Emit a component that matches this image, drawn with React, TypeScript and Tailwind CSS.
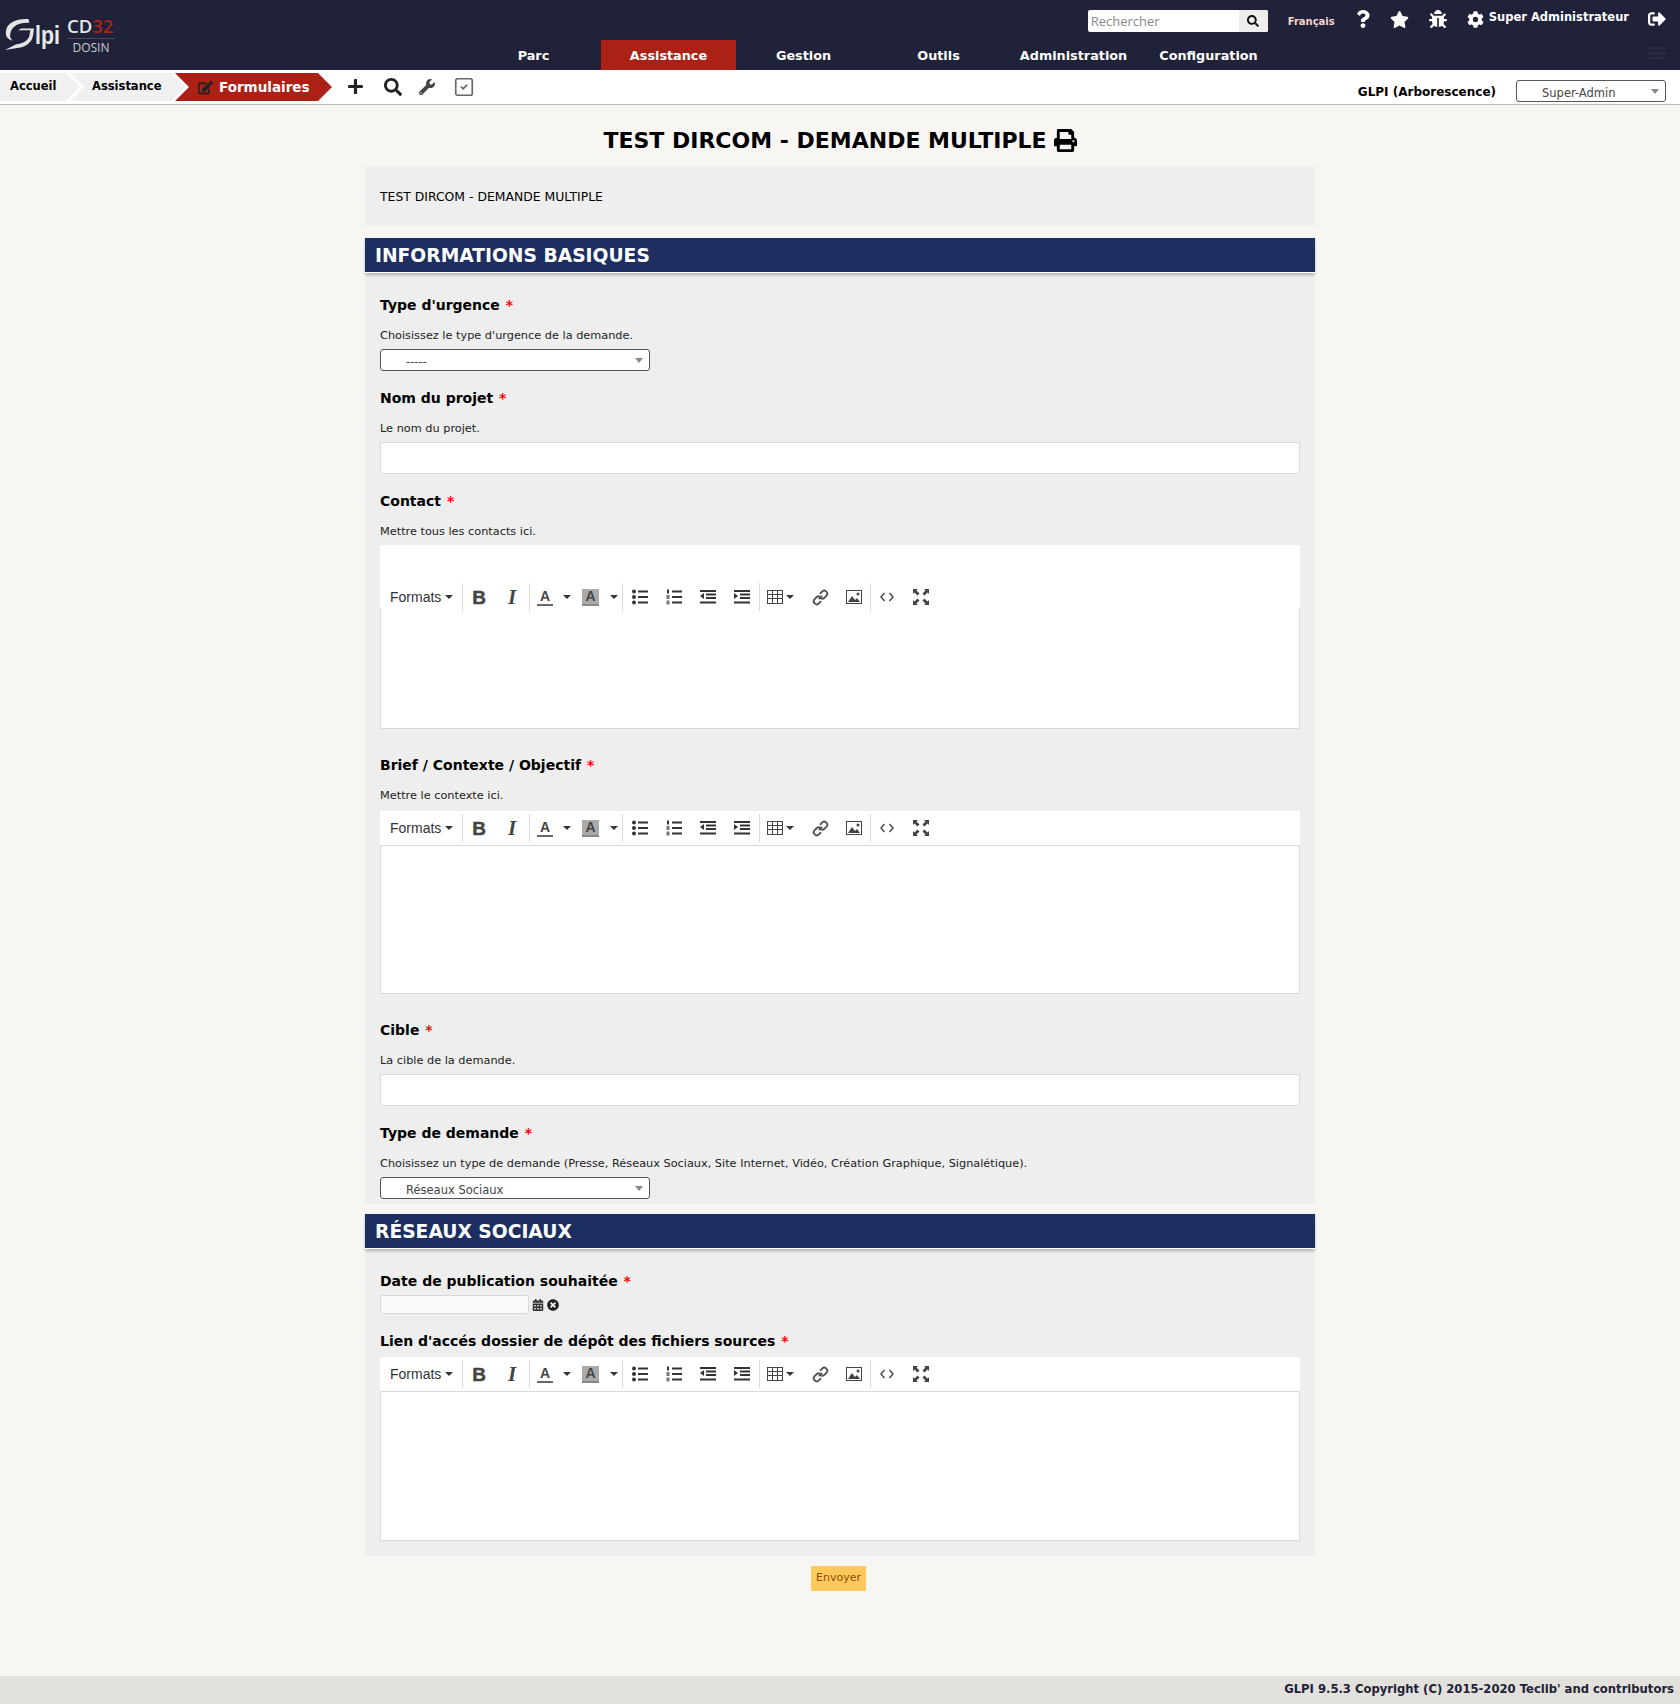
import {
  FaBug,
  FaCalendarAlt,
  FaCog,
  FaEdit,
  FaPlus,
  FaPrint,
  FaQuestion,
  FaSearch,
  FaSignOutAlt,
  FaStar,
  FaTimesCircle,
  FaWrench,
} from "react-icons/fa";
import { SquareCheck } from "lucide-react";

const menu = ["Parc", "Assistance", "Gestion", "Outils", "Administration", "Configuration"];

function Caret({ className = "" }: { className?: string }) {
  return (
    <span
      className={`inline-block h-0 w-0 border-x-[4px] border-t-[4px] border-x-transparent border-t-[#333] ${className}`}
    />
  );
}

function ToolIcon({ children, width = "w-[34px]" }: { children: React.ReactNode; width?: string }) {
  return <div className={`flex h-full shrink-0 items-center justify-center ${width}`}>{children}</div>;
}

function Sep() {
  return <div className="h-[28px] w-px shrink-0 bg-[#d9d9d9]" />;
}

function Lines({ kind }: { kind: "bullet" | "number" | "outdent" | "indent" }) {
  return (
    <svg width="16" height="16" viewBox="0 0 16 16" fill="#333">
      {kind === "bullet" && (
        <>
          <circle cx="2" cy="2.5" r="2" />
          <circle cx="2" cy="8" r="2" />
          <circle cx="2" cy="13.5" r="2" />
          <rect x="6" y="1.5" width="10" height="2" />
          <rect x="6" y="7" width="10" height="2" />
          <rect x="6" y="12.5" width="10" height="2" />
        </>
      )}
      {kind === "number" && (
        <>
          <rect x="1" y="0.5" width="2" height="4" />
          <rect x="0.5" y="6" width="3" height="4" fill="#777" />
          <rect x="0.5" y="11.5" width="3" height="4" fill="#777" />
          <rect x="6" y="1.5" width="10" height="2" />
          <rect x="6" y="7" width="10" height="2" />
          <rect x="6" y="12.5" width="10" height="2" />
        </>
      )}
      {(kind === "outdent" || kind === "indent") && (
        <>
          <rect x="0" y="1" width="16" height="2" />
          <rect x="6" y="4.500" width="10" height="2" />
          <rect x="6" y="8" width="10" height="2" />
          <rect x="0" y="12.500" width="16" height="2" />
          {kind === "outdent" ? <path d="M4 4v6L0 7z" /> : <path d="M0 4v6L4 7z" />}
        </>
      )}
    </svg>
  );
}

function Toolbar() {
  return (
    <div className="flex h-full items-center font-['Liberation_Sans',sans-serif] text-[#333]">
      <div className="flex w-[82px] shrink-0 items-center gap-[4px] pl-[10px] text-[14px]">
        Formats
        <Caret />
      </div>
      <Sep />
      <ToolIcon width="w-[32px]">
        <span className="text-[19px] leading-none font-bold text-[#444] [-webkit-text-stroke:0.4px_#444]">B</span>
      </ToolIcon>
      <ToolIcon width="w-[34px]">
        <span className="font-['Liberation_Serif',serif] text-[21px] leading-none font-bold text-[#444] italic">I</span>
      </ToolIcon>
      <Sep />
      <ToolIcon width="w-[30px]">
        <span className="w-[16px] border-b-2 border-[#666] text-center text-[14px] leading-[15px] font-bold text-[#444]">
          A
        </span>
      </ToolIcon>
      <ToolIcon width="w-[14px]">
        <Caret />
      </ToolIcon>
      <ToolIcon width="w-[32px]">
        <span className="ml-[1px] w-[17px] border-b-2 border-[#888] bg-[#aaa] text-center text-[14px] leading-[15px] font-bold text-[#444]">
          A
        </span>
      </ToolIcon>
      <ToolIcon width="w-[16px]">
        <Caret />
      </ToolIcon>
      <Sep />
      <ToolIcon>
        <Lines kind="bullet" />
      </ToolIcon>
      <ToolIcon>
        <Lines kind="number" />
      </ToolIcon>
      <ToolIcon>
        <Lines kind="outdent" />
      </ToolIcon>
      <ToolIcon>
        <Lines kind="indent" />
      </ToolIcon>
      <Sep />
      <div className="flex h-full w-[44px] shrink-0 items-center gap-[3px] pl-[7px]">
        <svg width="16" height="14" viewBox="0 0 16 14" fill="#444">
          <path d="M0 0h16v14H0zM1 1v3h4V1zm5 0v3h4V1zm5 0v3h4V1zM1 5v3h4V5zm5 0v3h4V5zm5 0v3h4V5zM1 9v4h4V9zm5 0v4h4V9zm5 0v4h4V9z" fillRule="evenodd" />
        </svg>
        <Caret />
      </div>
      <ToolIcon width="w-[33px]">
        <svg width="17" height="17" viewBox="0 0 16 16" fill="none" stroke="#555" strokeWidth="1.8">
          <path d="M6.500 9.500l3-3M7.500 4.500l2-2a2.300 2.300 0 0 1 4 4l-2 2a2.300 2.300 0 0 1-3.200 0M8.500 11.500l-2 2a2.300 2.300 0 0 1-4-4l2-2a2.300 2.300 0 0 1 3.200 0" />
        </svg>
      </ToolIcon>
      <ToolIcon width="w-[33px]">
        <svg width="16" height="14" viewBox="0 0 16 14">
          <rect x="0.500" y="0.500" width="15" height="13" fill="#fff" stroke="#444" />
          <path d="M2 12l4-6 3 4 2-2 3 4z" fill="#444" />
          <circle cx="12" cy="4" r="1.500" fill="#444" />
        </svg>
      </ToolIcon>
      <Sep />
      <ToolIcon width="w-[32px]">
        <svg width="14" height="10" viewBox="0 0 14 10" fill="none" stroke="#444" strokeWidth="1.400">
          <path d="M4.500 1L1 5l3.500 4M9.500 1L13 5l-3.500 4" />
        </svg>
      </ToolIcon>
      <ToolIcon width="w-[36px]">
        <svg width="16" height="16" viewBox="0 0 16 16" fill="#444">
          <path d="M0 0h5L3.500 1.500 6.500 4.500 4.500 6.500 1.500 3.500 0 5zM16 0v5l-1.500-1.500-3 3-2-2 3-3L11 0zM0 16v-5l1.500 1.500 3-3 2 2-3 3L5 16zM16 16h-5l1.500-1.500-3-3 2-2 3 3 1.500-1.500z" />
        </svg>
      </ToolIcon>
    </div>
  );
}

function Label({ text }: { text: string }) {
  return (
    <div className="h-[17px] text-[14px] leading-[17px] font-bold text-black">
      {text} <span className="ml-[1px] text-[#f00]">*</span>
    </div>
  );
}

function Help({ text }: { text: string }) {
  return <div className="mt-[15px] h-[14px] text-[11.3px] leading-[14px] text-[#222]">{text}</div>;
}

function SelectBox({ value, width = "w-[270px]" }: { value: string; width?: string }) {
  return (
    <div className={`relative h-[22px] rounded-[3px] border border-[#555] bg-white ${width}`}>
      <span className="absolute top-[4px] left-[25px] text-[11.5px] leading-[16px] text-[#444]">{value}</span>
      <Caret className="absolute top-[8px] right-[6px] border-x-[4px] border-t-[5px] border-t-[#888]" />
    </div>
  );
}

function TextInput() {
  return <div className="h-[32px] rounded-[2px] border border-[#d9d9d9] bg-white" />;
}

function Editor({ tall = false, last = false }: { tall?: boolean; last?: boolean }) {
  if (tall) {
    return (
      <div>
        <div className="h-[63px] bg-white pt-[38px]">
          <div className="h-[28px]">
            <Toolbar />
          </div>
        </div>
        <div className="h-[121px] border-x border-b border-[#d9d9d9] bg-white" />
      </div>
    );
  }
  return (
    <div>
      <div className="h-[34px] bg-white">
        <Toolbar />
      </div>
      <div className={`border border-[#d9d9d9] bg-white ${last ? "h-[150px]" : "h-[149px]"}`} />
    </div>
  );
}

function SectionTitle({ title }: { title: string }) {
  return (
    <div className="relative z-10 flex h-[35px] items-center border-b border-white bg-[#1d2e60] pt-[2px] pl-[10px] text-[18.7px] font-bold text-white shadow-[0_2px_3px_rgba(0,0,0,0.25)]">
      {title}
    </div>
  );
}

export default function App() {
  return (
    <div className="flex min-h-[1704px] flex-col bg-[#f7f6f2] font-['DejaVu_Sans',Verdana,sans-serif] text-black">
      <header className="h-[70px] bg-[#1f2238]">
        <div className="flex h-[40px]">
          <div className="flex items-start pt-[18px] pl-[5px] text-[#e8e8e8]">
            <svg width="30" height="33" viewBox="0 0 32 33" className="shrink-0" fill="#e4e4e4">
              <path d="M25 0C14-1 2 3 1 13c-1 6 3 9 7 10-3-3-3-6-2-9C8 7 16 3 26 4l-1-4zM14 12h13l-1 6c-2 6-8 8-14 9L0 33l18-3c6-2 11-6 12-13l1-7H17z" />
            </svg>
            <span className="mt-[5px] w-[24px] font-['Liberation_Sans',sans-serif] text-[26px] leading-[24px] font-bold [transform:scaleX(0.82)] [transform-origin:left]">
              lpi
            </span>
          </div>
          <div className="mt-[17px] ml-[8px] w-[48px] font-['Open_Sans',sans-serif] leading-none">
            <div className="border-b border-[#444a60] pb-[2px] text-[18.5px] font-semibold whitespace-nowrap text-[#e8e8e8]">
              CD<span className="text-[#a8221c]">32</span>
            </div>
            <div className="mt-[3px] text-center text-[12px] text-[#ccc]">DOSIN</div>
          </div>
          <div className="ml-auto flex h-[40px] items-start text-white">
            <div className="mt-[10px] flex h-[22px] w-[180px] overflow-hidden rounded-[2px] bg-white">
              <span className="flex-1 pl-[3px] font-['Open_Sans',sans-serif] text-[13px] leading-[22px] text-[#888]">Rechercher</span>
              <span className="flex w-[29px] items-center justify-center bg-[#eee] text-[#111]">
                <FaSearch size={12} />
              </span>
            </div>
            <span className="mt-[16px] ml-[20px] w-[48px] text-[10px] leading-[12px] font-bold text-[#f5d5d0]">Français</span>
            <FaQuestion size={18} className="mt-[10px] ml-[18px]" />
            <FaStar size={19} className="mt-[10px] ml-[18px]" />
            <FaBug size={18} className="mt-[10px] ml-[20px]" />
            <FaCog size={17} className="mt-[11px] ml-[20px]" />
            <span className="mt-[10px] ml-[5px] text-[11.5px] leading-[14px] font-bold whitespace-nowrap">Super Administrateur</span>
            <FaSignOutAlt size={18} className="mt-[10px] mr-[14px] ml-[19px]" />
          </div>
        </div>
        <nav className="relative flex h-[30px] pl-[466px]">
          {menu.map((item) => (
            <div
              key={item}
              className={`flex w-[135px] items-center justify-center pt-[1px] text-[12.8px] font-bold text-white ${
                item === "Assistance" ? "bg-[#ab2116]" : ""
              }`}
            >
              {item}
            </div>
          ))}
          <div className="absolute top-[7px] right-[14px] flex w-[17px] flex-col gap-[3px]">
            <div className="h-[2px] bg-[#2b2e42]" />
            <div className="h-[2px] bg-[#2b2e42]" />
            <div className="h-[2px] bg-[#2b2e42]" />
          </div>
        </nav>
      </header>

      <div className="flex h-[35px] border-b border-[#bbb] bg-white">
        <div className="mt-[3px] flex h-[28px] text-[11.5px] font-bold">
          <div className="flex w-[80px] items-center bg-[#f0f0f0] pl-[10px] [clip-path:polygon(0_0,66px_0,80px_50%,66px_100%,0_100%)]">
            Accueil
          </div>
          <div className="-ml-[10px] flex w-[115px] items-center bg-[#f0f0f0] pl-[22px] [clip-path:polygon(0_0,101px_0,115px_50%,101px_100%,0_100%,14px_50%)]">
            Assistance
          </div>
          <div className="-ml-[10px] flex w-[157px] items-center gap-[6px] bg-[#ab2116] pl-[23px] text-[13.5px] text-white [clip-path:polygon(0_0,143px_0,157px_50%,143px_100%,0_100%,14px_50%)]">
            <FaEdit size={15} className="text-[#222]" />
            Formulaires
          </div>
        </div>
        <div className="flex items-center pb-[1px] text-[#222]">
          <FaPlus size={17} className="ml-[15px]" />
          <FaSearch size={18} className="ml-[20px]" />
          <FaWrench size={16} className="ml-[17px] text-[#444]" />
          <SquareCheck size={22} strokeWidth={1.8} className="ml-[18px] text-[#666]" />
        </div>
        <div className="ml-auto pt-[9px]">
          <span className="mr-[20px] text-[12px] leading-[16px] font-bold">GLPI (Arborescence)</span>
        </div>
        <div className="mt-[10px] mr-[14px]">
          <SelectBox value="Super-Admin" width="w-[150px]" />
        </div>
      </div>

      <main className="mx-auto w-[950px]">
        <h1 className="flex h-[61px] items-center justify-center gap-[7px] pt-[10px] text-[22px] font-bold">
          TEST DIRCOM - DEMANDE MULTIPLE
          <FaPrint size={23} />
        </h1>
        <div className="flex h-[60px] items-center bg-[#eee] pt-[2px] pl-[15px] text-[12.4px]">TEST DIRCOM - DEMANDE MULTIPLE</div>

        <div className="mt-[12px]">
          <SectionTitle title="INFORMATIONS BASIQUES" />
        </div>
        <section className="bg-[#eee] px-[15px] pt-[24px] pb-[5px]">
          <Label text="Type d'urgence" />
          <Help text="Choisissez le type d'urgence de la demande." />
          <div className="mt-[6px]">
            <SelectBox value="-----" />
          </div>

          <div className="mt-[19px]">
            <Label text="Nom du projet" />
          </div>
          <Help text="Le nom du projet." />
          <div className="mt-[6px]">
            <TextInput />
          </div>

          <div className="mt-[19px]">
            <Label text="Contact" />
          </div>
          <Help text="Mettre tous les contacts ici." />
          <div className="mt-[6px]">
            <Editor tall />
          </div>

          <div className="mt-[28px]">
            <Label text="Brief / Contexte / Objectif" />
          </div>
          <Help text="Mettre le contexte ici." />
          <div className="mt-[8px]">
            <Editor />
          </div>

          <div className="mt-[28px]">
            <Label text="Cible" />
          </div>
          <Help text="La cible de la demande." />
          <div className="mt-[6px]">
            <TextInput />
          </div>

          <div className="mt-[19px]">
            <Label text="Type de demande" />
          </div>
          <Help text="Choisissez un type de demande (Presse, Réseaux Sociaux, Site Internet, Vidéo, Création Graphique, Signalétique)." />
          <div className="mt-[6px]">
            <SelectBox value="Réseaux Sociaux" />
          </div>
        </section>

        <div className="mt-[10px]">
          <SectionTitle title="RÉSEAUX SOCIAUX" />
        </div>
        <section className="bg-[#eee] px-[15px] pt-[24px] pb-[15px]">
          <Label text="Date de publication souhaitée" />
          <div className="mt-[5px] flex h-[19px] items-center gap-[3px]">
            <div className="h-[19px] w-[149px] rounded-[2px] border border-[#d9d9d9] bg-[#fafafa]" />
            <FaCalendarAlt size={12} className="text-[#333]" />
            <FaTimesCircle size={12} className="text-[#222]" />
          </div>
          <div className="mt-[19px]">
            <Label text="Lien d'accés dossier de dépôt des fichiers sources" />
          </div>
          <div className="mt-[7px]">
            <Editor last />
          </div>
        </section>

        <div className="mt-[10px] flex justify-center pr-[3px]">
          <div className="flex h-[25px] w-[55px] items-center justify-center bg-[#fec95c] text-[11px] text-[#8f4f00]">Envoyer</div>
        </div>
      </main>

      <footer className="mt-auto flex h-[28px] items-center justify-end bg-[#e2e1dc] pr-[6px] text-[11.6px] font-bold text-[#1f2238]">
        GLPI 9.5.3 Copyright (C) 2015-2020 Teclib' and contributors
      </footer>
    </div>
  );
}
